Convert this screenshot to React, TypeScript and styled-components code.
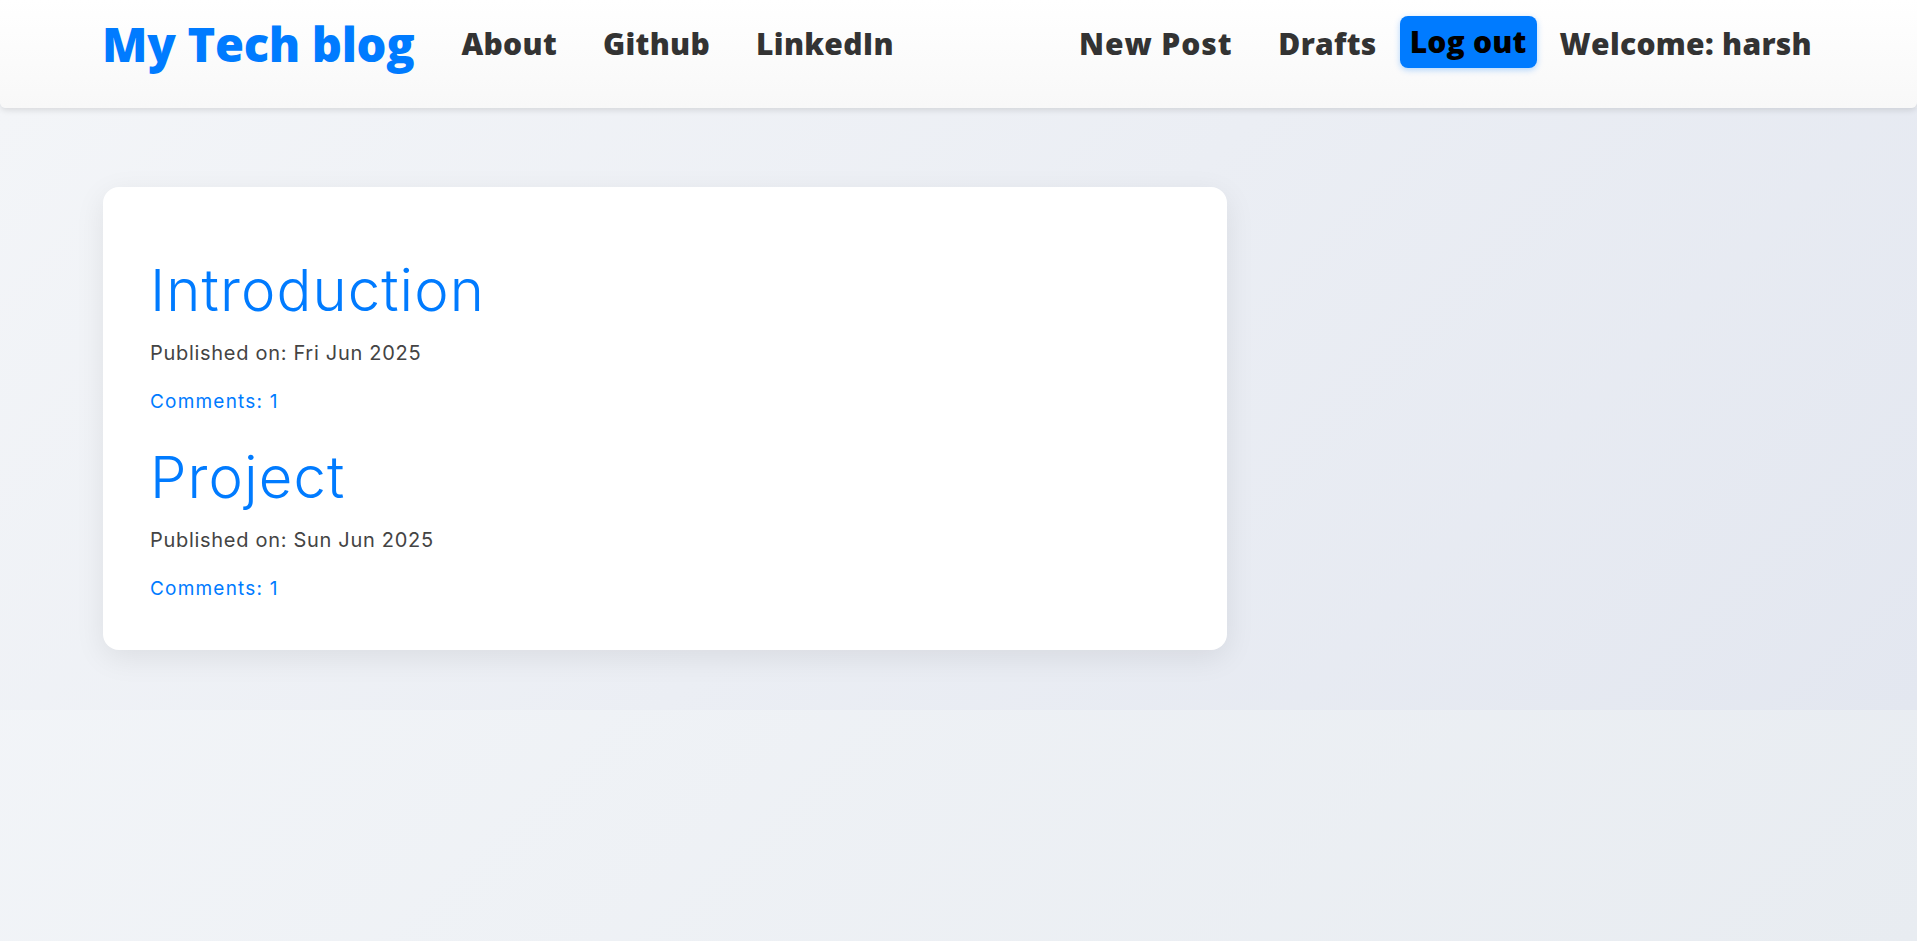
import React from "react";
import styled, { createGlobalStyle } from "styled-components";

const GlobalStyle = createGlobalStyle`
  html, body {
    margin: 0;
    padding: 0;
  }
  body {
    min-height: 100vh;
    background: linear-gradient(135deg, #f5f7fa 0%, #e8ecf1 100%);
    font-family: "Inter", "Liberation Sans", sans-serif;
  }
  * { box-sizing: border-box; }
`;

const Page = styled.div`
  min-height: 941px;
  display: flex;
  flex-direction: column;
`;

const Header = styled.header`
  height: 108px;
  padding: 16px 105px 0 102px;
  display: flex;
  align-items: flex-start;
  justify-content: space-between;
  background: linear-gradient(180deg, #ffffff 0%, #f8f8f8 100%);
  box-shadow: 0 2px 6px rgba(0, 0, 0, 0.12);
  border-radius: 0 0 6px 6px;
  position: relative;
  z-index: 1;
  font-family: "Open Sans", "Liberation Sans", sans-serif;
  font-weight: 800;
`;

const NavGroup = styled.nav<{ $gap: number }>`
  display: flex;
  align-items: flex-start;
  gap: ${(p) => p.$gap}px;
`;

const Logo = styled.a`
  color: #007bff;
  font-size: 47px;
  line-height: 52px;
  margin-top: 2px;
  text-decoration: none;
  letter-spacing: -0.3px;
  margin-right: 1px;
`;

const NavLink = styled.a<{ $extra?: number; $spacing?: number }>`
  color: #333;
  font-size: 30px;
  line-height: 52px;
  margin-top: 2px;
  margin-right: ${(p) => p.$extra ?? 0}px;
  text-decoration: none;
  letter-spacing: ${(p) => p.$spacing ?? 0.3}px;
`;

const LogoutButton = styled.button`
  background: #007bff;
  color: #000;
  border: none;
  border-radius: 8px;
  height: 52px;
  padding: 0 10px;
  font-family: "Open Sans", "Liberation Sans", sans-serif;
  font-weight: 800;
  font-size: 30px;
  line-height: 52px;
  letter-spacing: 0.2px;
  box-shadow: 0 2px 6px rgba(0, 123, 255, 0.3);
  margin: 0 -1px;
  cursor: pointer;
`;

const Main = styled.main`
  height: 602px;
  padding: 79px 0 0 103px;
  background: linear-gradient(135deg, #f3f5f8 0%, #e3e7f0 100%);
`;

const Card = styled.section`
  width: 1124px;
  height: 463px;
  background: #ffffff;
  border-radius: 16px;
  box-shadow: 0 8px 30px rgba(0, 0, 0, 0.08);
  padding: 68px 45px 0 47px;
  display: flex;
  flex-direction: column;
  gap: 26px;
`;

const Post = styled.article`
  display: flex;
  flex-direction: column;
  align-items: flex-start;
`;

const PostTitle = styled.h2`
  margin: 0;
  font-family: "Inter", "Liberation Sans", sans-serif;
  font-weight: 300;
  font-size: 58px;
  line-height: 70px;
  color: #007bff;
  letter-spacing: 1.1px;
`;

const PostDate = styled.p`
  margin: 14px 0 0;
  font-size: 20px;
  line-height: 28px;
  color: #444;
  font-weight: 400;
  letter-spacing: 0.7px;
`;

const Comments = styled.a`
  margin-top: 21px;
  font-size: 19px;
  line-height: 28px;
  color: #007bff;
  text-decoration: none;
  font-weight: 400;
  letter-spacing: 1.2px;
`;

const posts = [
  { title: "Introduction", date: "Fri Jun 2025", comments: 1 },
  { title: "Project", date: "Sun Jun 2025", comments: 1 },
];

export default function App() {
  return (
    <Page>
      <GlobalStyle />
      <Header>
        <NavGroup $gap={46}>
          <Logo href="#">My Tech blog</Logo>
          <NavLink href="#">About</NavLink>
          <NavLink href="#">Github</NavLink>
          <NavLink href="#">LinkedIn</NavLink>
        </NavGroup>
        <NavGroup $gap={24}>
          <NavLink href="#" $extra={22} $spacing={0.9}>New Post</NavLink>
          <NavLink href="#">Drafts</NavLink>
          <LogoutButton>Log out</LogoutButton>
          <NavLink as="span">Welcome: harsh</NavLink>
        </NavGroup>
      </Header>
      <Main>
        <Card>
          {posts.map((p) => (
            <Post key={p.title}>
              <PostTitle>{p.title}</PostTitle>
              <PostDate>Published on: {p.date}</PostDate>
              <Comments href="#">Comments: {p.comments}</Comments>
            </Post>
          ))}
        </Card>
      </Main>
    </Page>
  );
}
